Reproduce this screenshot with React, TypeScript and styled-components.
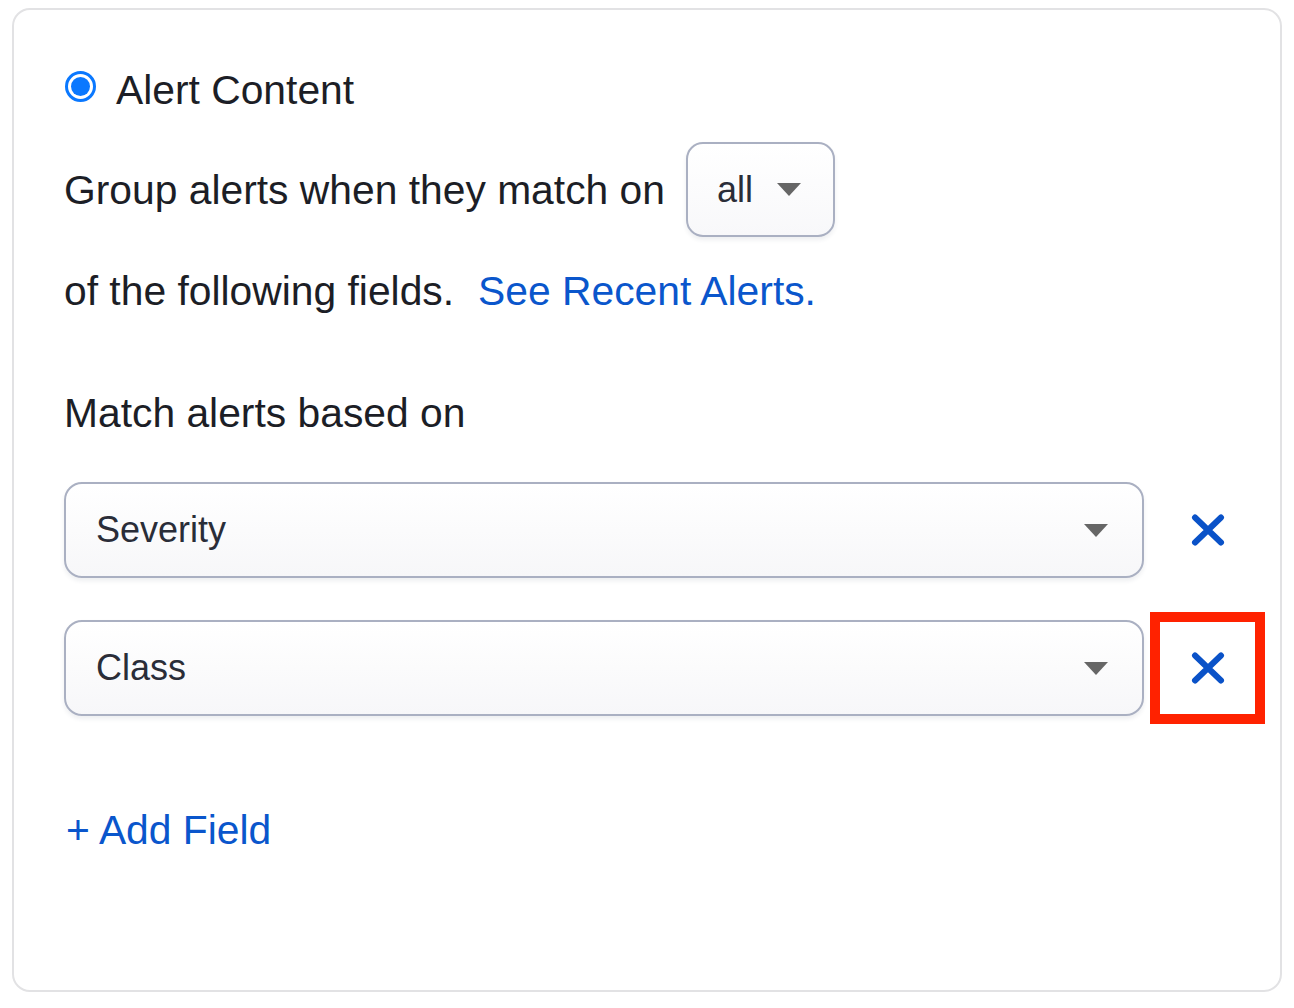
import React, { ReactElement, useState } from 'react'
import styled, { createGlobalStyle } from 'styled-components'

const GlobalStyle = createGlobalStyle`
  body {
    margin: 0;
    background: #ffffff;
    font-family: 'Liberation Sans', Arial, sans-serif;
    color: #1c1e26;
  }
`

const Card = styled.div`
  box-sizing: border-box;
  margin: 8px 12px 0 12px;
  width: 1270px;
  height: 984px;
  border: 2px solid #e2e2e4;
  border-radius: 18px;
  padding: 58px 15px 0 50px;
`

const RadioRow = styled.label`
  display: flex;
  align-items: center;
  gap: 20px;
  height: 44px;
  font-size: 40.8px;
  line-height: 44px;
`

const RadioDot = styled.span`
  box-sizing: border-box;
  width: 31px;
  height: 31px;
  border-radius: 50%;
  border: 3px solid #0a78ff;
  display: flex;
  align-items: center;
  justify-content: center;
  margin-left: 1px;
  margin-top: -8px;

  &::after {
    content: '';
    width: 19px;
    height: 19px;
    border-radius: 50%;
    background: #0a78ff;
  }
`

const Line = styled.div<{ $top: number }>`
  display: flex;
  align-items: center;
  margin-top: ${({ $top }) => $top}px;
  font-size: 40.8px;
  line-height: 48px;
`

const Link = styled.a`
  color: #0a56cc;
  text-decoration: none;
  margin-left: 24px;
  cursor: pointer;
`

const Caret = styled.span`
  width: 0;
  height: 0;
  border-left: 12px solid transparent;
  border-right: 12px solid transparent;
  border-top: 13px solid #666666;
`

const InlineSelect = styled.div`
  box-sizing: border-box;
  display: flex;
  align-items: center;
  gap: 24px;
  margin-left: 21px;
  width: 149px;
  height: 95px;
  padding: 0 0 0 29px;
  border: 2px solid #aab0c2;
  border-radius: 17px;
  background: linear-gradient(#ffffff, #f8f8fa);
  box-shadow: 0 3px 4px rgba(40, 50, 80, 0.08);
  font-size: 36px;
  color: #2a2d38;
`

const FieldRow = styled.div<{ $top: number }>`
  display: flex;
  align-items: center;
  gap: 6px;
  margin-top: ${({ $top }) => $top}px;
`

const FieldSelect = styled.div`
  box-sizing: border-box;
  flex: 1;
  height: 96px;
  display: flex;
  align-items: center;
  justify-content: space-between;
  padding: 0 34px 0 30px;
  border: 2px solid #aab0c2;
  border-radius: 18px;
  background: linear-gradient(#ffffff, #f7f7f9);
  box-shadow: 0 3px 4px rgba(40, 50, 80, 0.08);
  font-size: 36px;
  color: #2a2d38;
`

const RemoveButton = styled.button<{ $highlighted: boolean }>`
  box-sizing: border-box;
  width: 115px;
  height: 112px;
  display: flex;
  align-items: center;
  justify-content: center;
  background: transparent;
  border: 10px solid ${({ $highlighted }) => ($highlighted ? '#ff2200' : 'transparent')};
  padding: 0;
  cursor: pointer;
`

const AddField = styled.a`
  display: block;
  margin-top: 82px;
  font-size: 40.8px;
  line-height: 48px;
  color: #0a56cc;
  margin-left: 2px;
  cursor: pointer;
`

const CrossIcon = (): ReactElement => (
  <svg width="34" height="32" viewBox="0 0 34 32">
    <path
      d="M4 3.5 L30 28.5 M30 3.5 L4 28.5"
      stroke="#0a52c8"
      strokeWidth="6"
      strokeLinecap="round"
    />
  </svg>
)

const App = (): ReactElement => {
  const [fields, setFields] = useState(['Severity', 'Class'])

  return (
    <>
      <GlobalStyle />
      <Card>
        <RadioRow>
          <RadioDot />
          Alert Content
        </RadioRow>
        <Line $top={30}>
          Group alerts when they match on
          <InlineSelect>
            all
            <Caret />
          </InlineSelect>
        </Line>
        <Line $top={30}>
          of the following fields.
          <Link>See Recent Alerts.</Link>
        </Line>
        <Line $top={74}>Match alerts based on</Line>
        {fields.map((field, i) => (
          <FieldRow key={field} $top={i === 0 ? 37 : 26}>
            <FieldSelect>
              {field}
              <Caret />
            </FieldSelect>
            <RemoveButton
              $highlighted={i === 1}
              onClick={() => setFields(fields.filter((f) => f !== field))}
            >
              <CrossIcon />
            </RemoveButton>
          </FieldRow>
        ))}
        <AddField>+ Add Field</AddField>
      </Card>
    </>
  )
}

export default App
